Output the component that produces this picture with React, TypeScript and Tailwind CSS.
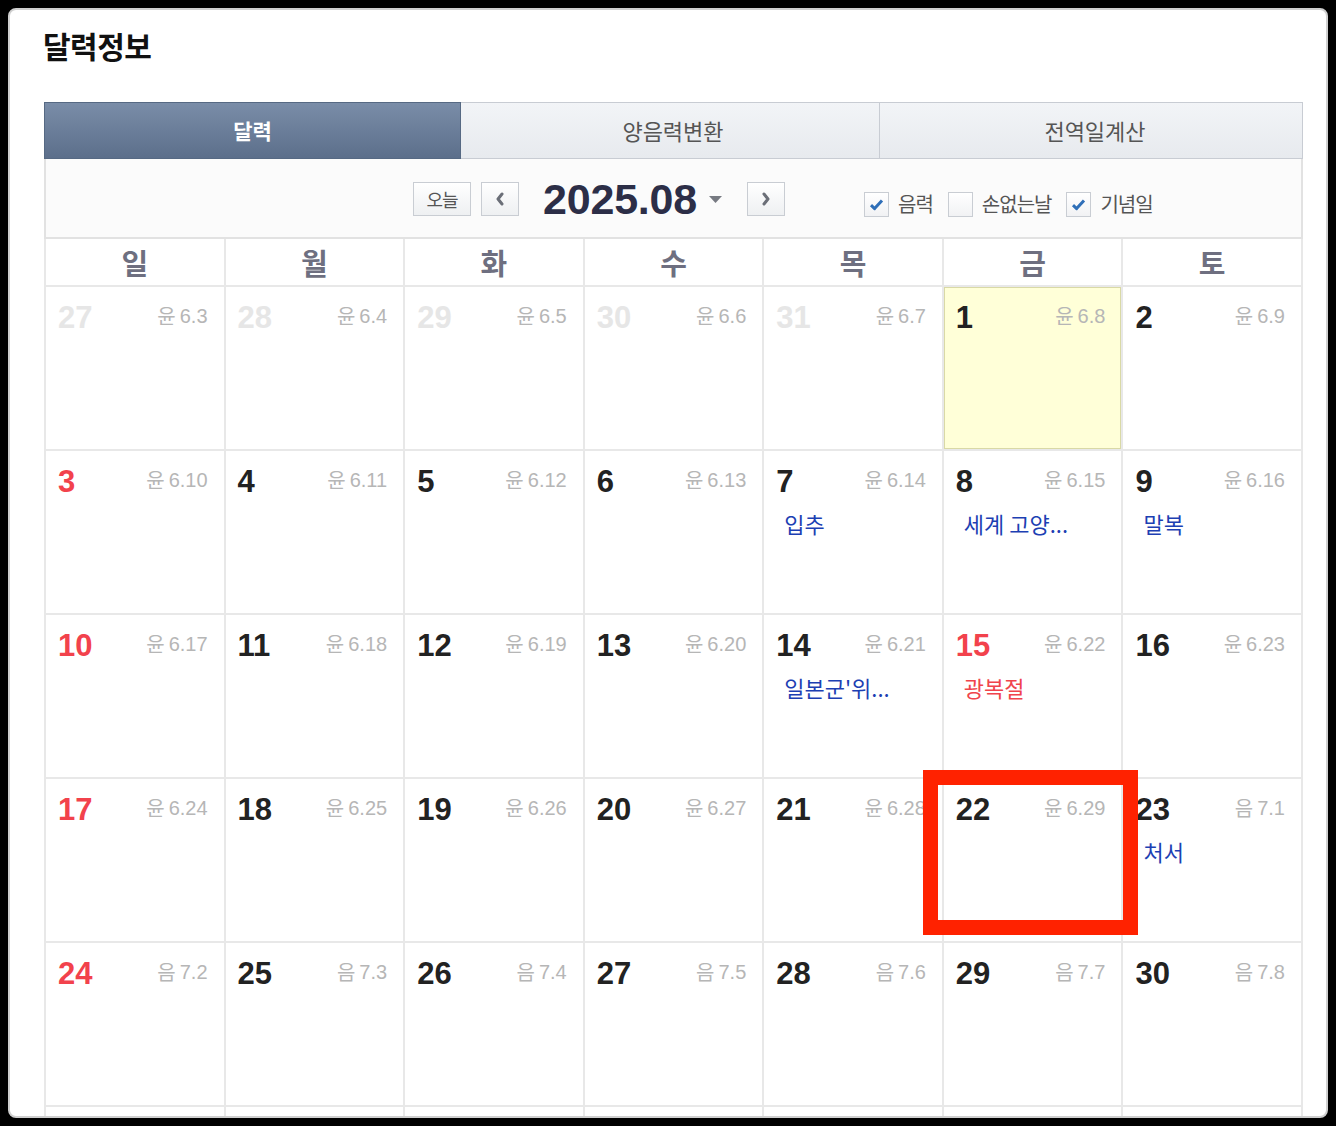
import React from 'react';

// 달력정보 — monthly calendar card

type Day = {
  d: number;
  lunar: string;
  muted?: boolean;
  red?: boolean;
  today?: boolean;
  hidden?: boolean;
  event?: { text: string; red?: boolean };
};

const KR = "font-['Noto_Sans_CJK_KR',sans-serif]";
const NUM = "font-['Liberation_Sans','Noto_Sans_CJK_KR',sans-serif]";

const weeks: Day[][] = [
  [
    { d: 27, lunar: '윤|6.3', muted: true },
    { d: 28, lunar: '윤|6.4', muted: true },
    { d: 29, lunar: '윤|6.5', muted: true },
    { d: 30, lunar: '윤|6.6', muted: true },
    { d: 31, lunar: '윤|6.7', muted: true },
    { d: 1, lunar: '윤|6.8', today: true },
    { d: 2, lunar: '윤|6.9' },
  ],
  [
    { d: 3, lunar: '윤|6.10', red: true },
    { d: 4, lunar: '윤|6.11' },
    { d: 5, lunar: '윤|6.12' },
    { d: 6, lunar: '윤|6.13' },
    { d: 7, lunar: '윤|6.14', event: { text: '입추' } },
    { d: 8, lunar: '윤|6.15', event: { text: '세계 고양...' } },
    { d: 9, lunar: '윤|6.16', event: { text: '말복' } },
  ],
  [
    { d: 10, lunar: '윤|6.17', red: true },
    { d: 11, lunar: '윤|6.18' },
    { d: 12, lunar: '윤|6.19' },
    { d: 13, lunar: '윤|6.20' },
    { d: 14, lunar: '윤|6.21', event: { text: "일본군'위..." } },
    { d: 15, lunar: '윤|6.22', red: true, event: { text: '광복절', red: true } },
    { d: 16, lunar: '윤|6.23' },
  ],
  [
    { d: 17, lunar: '윤|6.24', red: true },
    { d: 18, lunar: '윤|6.25' },
    { d: 19, lunar: '윤|6.26' },
    { d: 20, lunar: '윤|6.27' },
    { d: 21, lunar: '윤|6.28' },
    { d: 22, lunar: '윤|6.29' },
    { d: 23, lunar: '음|7.1', event: { text: '처서' } },
  ],
  [
    { d: 24, lunar: '음|7.2', red: true },
    { d: 25, lunar: '음|7.3' },
    { d: 26, lunar: '음|7.4' },
    { d: 27, lunar: '음|7.5' },
    { d: 28, lunar: '음|7.6' },
    { d: 29, lunar: '음|7.7' },
    { d: 30, lunar: '음|7.8' },
  ],
  [
    { d: 31, lunar: '음|7.9', hidden: true },
    { d: 1, lunar: '음|7.10', hidden: true },
    { d: 2, lunar: '음|7.11', hidden: true },
    { d: 3, lunar: '음|7.12', hidden: true },
    { d: 4, lunar: '음|7.13', hidden: true },
    { d: 5, lunar: '음|7.14', hidden: true },
    { d: 6, lunar: '음|7.15', hidden: true },
  ],
];

const weekdays = ['일', '월', '화', '수', '목', '금', '토'];

const Check: React.FC<{ checked?: boolean; label: string }> = ({ checked, label }) => (
  <label className="flex items-center gap-[9px]">
    <span className="flex h-[25px] w-[25px] items-center justify-center border border-[#c9cdd3] bg-gradient-to-b from-white to-[#f1f2f4]">
      {checked && (
        <svg width="15" height="13" viewBox="0 0 15 13">
          <path d="M2 7.2 L5.6 10.6 L13 2.4" fill="none" stroke="#2f6fb8" strokeWidth="3" strokeLinejoin="round" />
        </svg>
      )}
    </span>
    <span className={`${KR} text-[20px] leading-none tracking-[-1px] text-[#555]`}>{label}</span>
  </label>
);

const NavButton: React.FC<{ dir: 'prev' | 'next' }> = ({ dir }) => (
  <button className="flex h-[34px] w-[38px] items-center justify-center border border-[#c9cdd3] bg-gradient-to-b from-white to-[#eef0f2]">
    <svg width="10" height="14" viewBox="0 0 10 14">
      <path
        d={dir === 'prev' ? 'M7 2 L3 7 L7 12' : 'M3 2 L7 7 L3 12'}
        fill="none"
        stroke="#6b6f78"
        strokeWidth="3"
        strokeLinecap="round"
        strokeLinejoin="round"
      />
    </svg>
  </button>
);

const Cell: React.FC<{ day: Day }> = ({ day }) => {
  const [prefix, value] = day.lunar.split('|');
  const numColor = day.muted ? 'text-[#e6e6e6]' : day.red ? 'text-[#f2424c]' : 'text-[#222]';
  if (day.hidden) {
    return <div className="h-[164px] border-r-2 border-b-2 border-[#e8e8e8] bg-white" />;
  }
  return (
    <div
      className={`h-[164px] border-r-2 border-b-2 border-[#e8e8e8] pl-[12px] pr-[16px] pt-[15px] ${
        day.today ? 'bg-[#ffffd8] shadow-[inset_0_0_0_1px_#d9d9a6]' : 'bg-white'
      }`}
    >
      <div className="flex items-start justify-between">
        <span className={`${NUM} text-[31px] font-bold leading-none ${numColor}`}>{day.d}</span>
        <span className={`${NUM} mt-[4px] flex items-center gap-[4px] text-[20px] leading-none text-[#b6b6b6]`}>
          <span className={KR}>{prefix}</span>
          <span>{value}</span>
        </span>
      </div>
      {day.event && (
        <div
          className={`${KR} mt-[15px] pl-[8px] text-[22px] leading-none ${
            day.event.red ? 'text-[#f0444c]' : 'text-[#1d3fb3]'
          }`}
        >
          {day.event.text}
        </div>
      )}
    </div>
  );
};

export default function App() {
  return (
    <div className="relative h-[1126px] w-[1336px] overflow-hidden bg-black p-[8px]">
      <div className="h-[1110px] w-[1320px] overflow-hidden rounded-[8px] border-2 border-[#cfcfcf] bg-white pl-[34px] pt-[16px]">
        <h1 className={`${KR} ml-[-1px] text-[30px] font-bold leading-[38px] tracking-[-0.5px] text-[#111]`}>달력정보</h1>

        <div className="mt-[38px] w-[1259px]">
          {/* tabs */}
          <div className="flex h-[57px]">
            <div
              className={`${KR} flex w-[417px] items-center justify-center border border-[#566983] bg-gradient-to-b from-[#7a8da8] to-[#5c6f8b] text-[21px] font-bold text-white`}
            >
              달력
            </div>
            <div
              className={`${KR} flex w-[419px] items-center justify-center border border-l-0 border-[#c8ccd3] bg-gradient-to-b from-[#f2f4f7] to-[#e7eaee] pl-[6px] text-[22px] text-[#555]`}
            >
              양음력변환
            </div>
            <div
              className={`${KR} flex flex-1 items-center justify-center border border-l-0 border-[#c8ccd3] bg-gradient-to-b from-[#f2f4f7] to-[#e7eaee] pl-[8px] text-[22px] text-[#555]`}
            >
              전역일계산
            </div>
          </div>

          {/* toolbar */}
          <div className="flex h-[80px] items-center border-x-2 border-b-2 border-[#e2e2e2] bg-[#fbfbfb] pl-[367px] pt-[2px]">
            <button
              className={`${KR} flex h-[34px] w-[58px] items-center justify-center border border-[#c9cdd3] bg-gradient-to-b from-white to-[#eef0f2] text-[18px] tracking-[-1px] text-[#555]`}
            >
              오늘
            </button>
            <div className="ml-[10px]">
              <NavButton dir="prev" />
            </div>
            <div className="ml-[24px] flex items-center">
              <span className={`${NUM} text-[43px] font-bold leading-none tracking-[-0.2px] text-[#2c2e47]`}>2025.08</span>
              <svg className="ml-[12px]" width="13" height="7" viewBox="0 0 13 7">
                <path d="M0 0 H13 L6.5 7 Z" fill="#777a82" />
              </svg>
            </div>
            <div className="ml-[25px]">
              <NavButton dir="next" />
            </div>
            <div className="ml-[79px] mt-[10px] flex items-center gap-[15px]">
              <Check checked label="음력" />
              <Check label="손없는날" />
              <Check checked label="기념일" />
            </div>
          </div>

          {/* weekday header + days */}
          <div className="grid grid-cols-7 border-l-2 border-[#e8e8e8]">
            {weekdays.map((w) => (
              <div
                key={w}
                className={`${KR} flex h-[48px] items-center justify-center border-r-2 border-b-2 border-[#e8e8e8] pt-[2px] text-[29px] font-bold text-[#6e6f80]`}
              >
                {w}
              </div>
            ))}
            {weeks.flat().map((day, i) => (
              <Cell key={i} day={day} />
            ))}
          </div>
        </div>
      </div>

      {/* annotation box */}
      <div className="absolute left-[923px] top-[770px] h-[165px] w-[215px] border-[15px] border-[#ff2200]" />
    </div>
  );
}
